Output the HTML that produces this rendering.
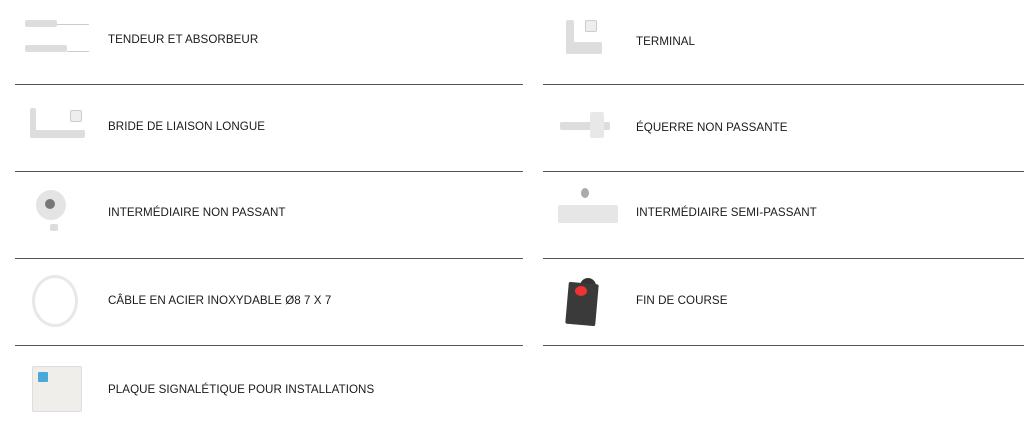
<!DOCTYPE html>
<html><head><style>
body{margin:0;width:1024px;height:426px;background:#fff;position:relative;overflow:hidden;font-family:"Liberation Sans",sans-serif}
.t{position:absolute;font-size:11.6px;color:#1a1a1a;letter-spacing:0.05px;line-height:14px;white-space:nowrap}
.l{position:absolute;height:1px;background:#555}
.g{position:absolute;background:#ddd;border-radius:2px}
</style></head><body>
<div class="l" style="left:15px;width:508px;top:84px"></div>
<div class="l" style="left:15px;width:508px;top:171px"></div>
<div class="l" style="left:15px;width:508px;top:258px"></div>
<div class="l" style="left:15px;width:508px;top:345px"></div>
<div class="l" style="left:543px;width:481px;top:84px"></div>
<div class="l" style="left:543px;width:481px;top:171px"></div>
<div class="l" style="left:543px;width:481px;top:258px"></div>
<div class="l" style="left:543px;width:481px;top:345px"></div>

<div class="t" style="left:108px;top:33px">TENDEUR ET ABSORBEUR</div>
<div class="t" style="left:108px;top:120px">BRIDE DE LIAISON LONGUE</div>
<div class="t" style="left:108px;top:206px">INTERMÉDIAIRE NON PASSANT</div>
<div class="t" style="left:108px;top:294px">CÂBLE EN ACIER INOXYDABLE Ø8 7 X 7</div>
<div class="t" style="left:108px;top:383px">PLAQUE SIGNALÉTIQUE POUR INSTALLATIONS</div>
<div class="t" style="left:636px;top:35px">TERMINAL</div>
<div class="t" style="left:636px;top:121px">ÉQUERRE NON PASSANTE</div>
<div class="t" style="left:636px;top:206px">INTERMÉDIAIRE SEMI-PASSANT</div>
<div class="t" style="left:636px;top:294px">FIN DE COURSE</div>

<div class="g" style="left:25px;top:20px;width:32px;height:7px"></div>
<div class="g" style="left:57px;top:24px;width:32px;height:1px;background:#ccc"></div>
<div class="g" style="left:25px;top:45px;width:42px;height:7px"></div>
<div class="g" style="left:67px;top:51px;width:22px;height:1px;background:#ccc"></div>
<div class="g" style="left:30px;top:108px;width:6px;height:30px"></div>
<div class="g" style="left:30px;top:130px;width:55px;height:8px"></div>
<div class="g" style="left:70px;top:110px;width:10px;height:10px;background:#eee;border:1px solid #ccc"></div>
<div class="g" style="left:36px;top:190px;width:30px;height:30px;border-radius:50%;background:#e4e4e4"></div>
<div class="g" style="left:45px;top:199px;width:10px;height:10px;border-radius:50%;background:#777"></div>
<div class="g" style="left:50px;top:224px;width:8px;height:7px"></div>
<div class="g" style="left:32px;top:275px;width:40px;height:46px;border-radius:50%;background:none;border:3px solid #e8e8e8"></div>
<div class="g" style="left:32px;top:366px;width:48px;height:44px;background:#f0eeea;border:1px solid #ddd"></div>
<div class="g" style="left:38px;top:372px;width:10px;height:10px;background:#4aa8d8;border-radius:1px"></div>
<div class="g" style="left:566px;top:20px;width:8px;height:34px"></div>
<div class="g" style="left:566px;top:42px;width:36px;height:12px"></div>
<div class="g" style="left:585px;top:20px;width:10px;height:10px;background:#eee;border:1px solid #ccc"></div>
<div class="g" style="left:560px;top:122px;width:50px;height:8px"></div>
<div class="g" style="left:590px;top:112px;width:14px;height:26px;background:#e8e8e8"></div>
<div class="g" style="left:558px;top:205px;width:60px;height:18px;background:#e6e6e6"></div>
<div class="g" style="left:581px;top:188px;width:8px;height:10px;background:#aaa;border-radius:50%"></div>
<div class="g" style="left:580px;top:278px;width:16px;height:12px;background:#333;border-radius:8px 8px 0 0"></div>
<div class="g" style="left:567px;top:283px;width:30px;height:42px;background:#3a3a3a;transform:rotate(5deg)"></div>
<div class="g" style="left:575px;top:286px;width:12px;height:10px;background:#e33;border-radius:50%"></div>
</body></html>
